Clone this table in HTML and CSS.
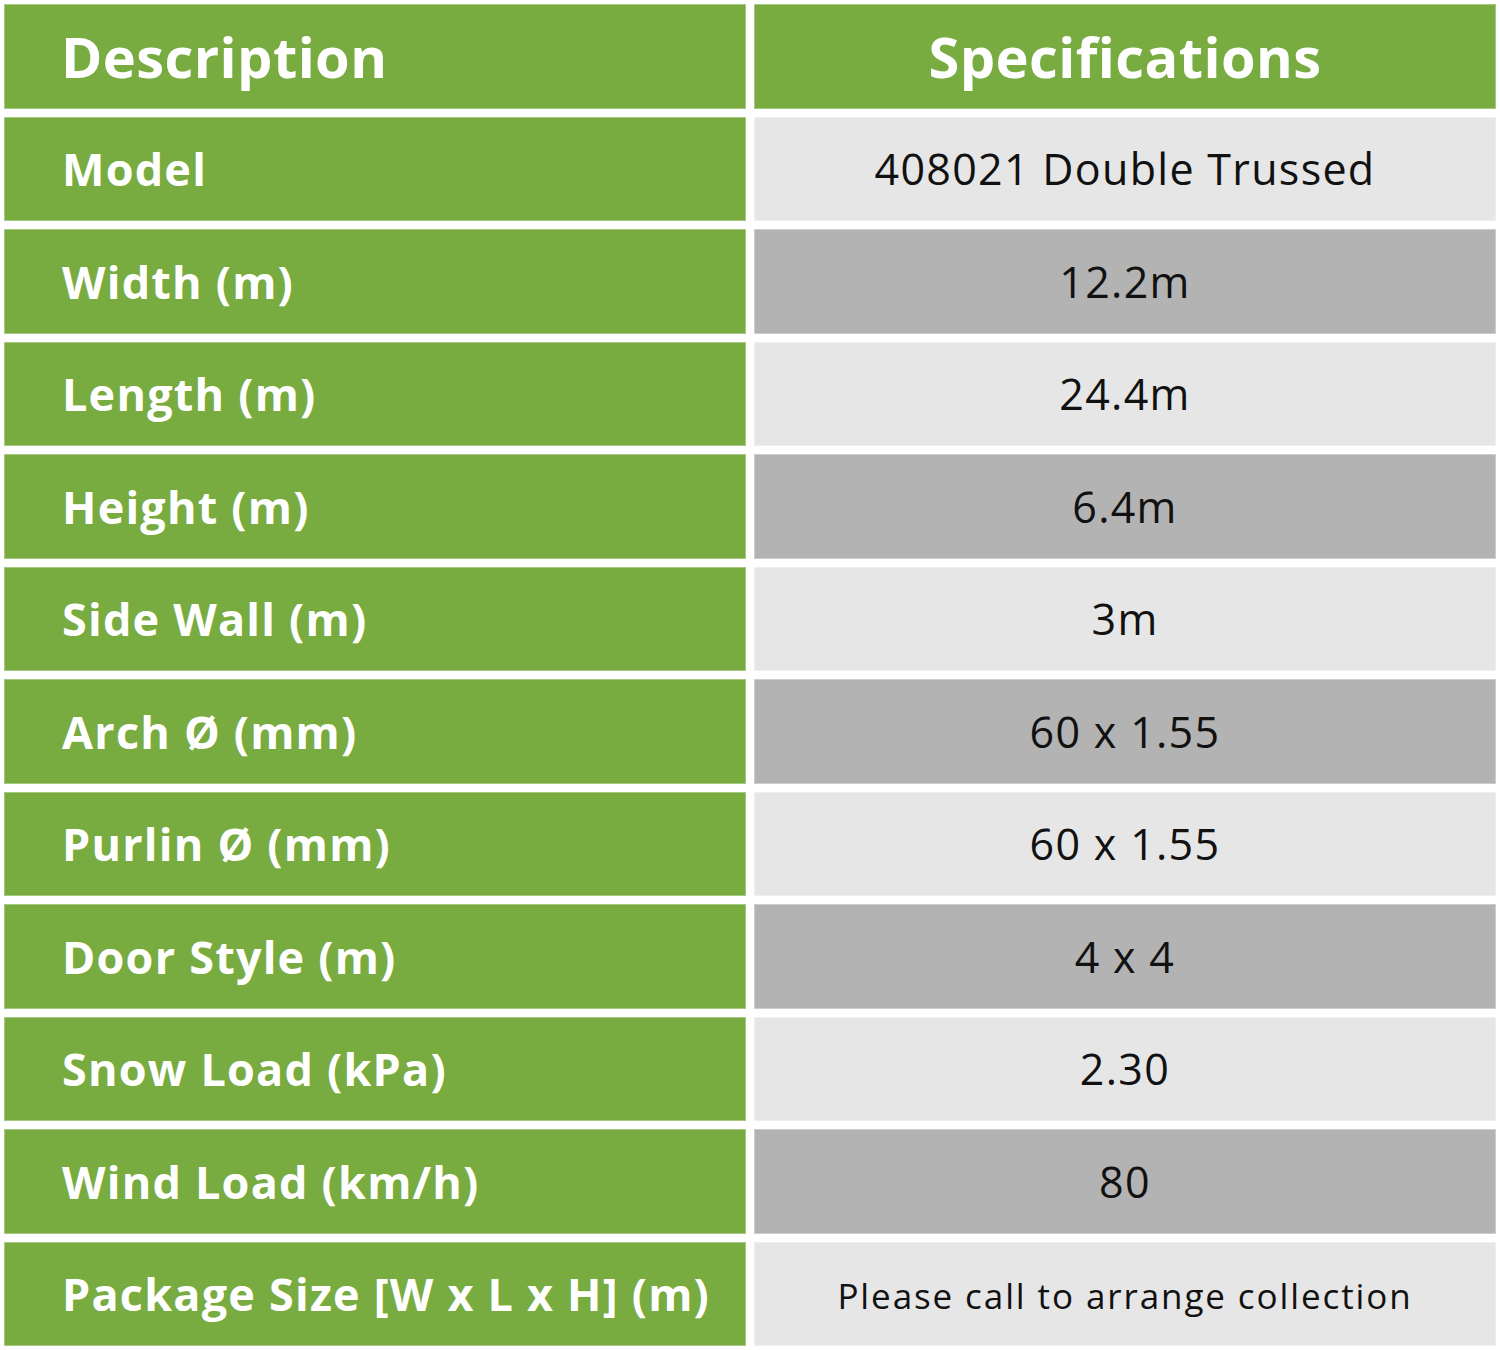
FILE: index.html
```html
<!DOCTYPE html>
<html lang="en">
<head>
<meta charset="utf-8">
<title>Specifications</title>
<link rel="stylesheet" href="styles.css">
</head>
<body>
<div class="spec-table">
  <div class="cell head label">Description</div>
  <div class="cell head value">Specifications</div>

  <div class="cell label">Model</div>
  <div class="cell value light">408021 Double Trussed</div>

  <div class="cell label">Width (m)</div>
  <div class="cell value dark">12.2m</div>

  <div class="cell label">Length (m)</div>
  <div class="cell value light">24.4m</div>

  <div class="cell label">Height (m)</div>
  <div class="cell value dark">6.4m</div>

  <div class="cell label">Side Wall (m)</div>
  <div class="cell value light">3m</div>

  <div class="cell label">Arch Ø (mm)</div>
  <div class="cell value dark">60 x 1.55</div>

  <div class="cell label">Purlin Ø (mm)</div>
  <div class="cell value light">60 x 1.55</div>

  <div class="cell label">Door Style (m)</div>
  <div class="cell value dark">4 x 4</div>

  <div class="cell label">Snow Load (kPa)</div>
  <div class="cell value light">2.30</div>

  <div class="cell label">Wind Load (km/h)</div>
  <div class="cell value dark">80</div>

  <div class="cell label">Package Size [W x L x H] (m)</div>
  <div class="cell value light small">Please call to arrange collection</div>
</div>
</body>
</html>
```

FILE: styles.css
```css
html, body {
  margin: 0;
  padding: 0;
  background: #ffffff;
}

body {
  font-family: "Open Sans", "Noto Sans", "Liberation Sans", sans-serif;
}

.spec-table {
  box-sizing: border-box;
  width: 1500px;
  height: 1350px;
  padding: 4px;
  display: grid;
  grid-template-columns: 1fr 1fr;
  grid-template-rows: repeat(12, 1fr);
  gap: 8px;
}

.cell {
  display: flex;
  align-items: center;
  white-space: nowrap;
  box-shadow: inset 0 0 0 1px rgba(255, 255, 255, 0.35);
}

.label {
  background: #78ab40;
  color: #ffffff;
  font-weight: 700;
  font-size: 45px;
  padding-left: 58px;
  letter-spacing: 1.2px;
}

.value {
  justify-content: center;
  color: #111111;
  font-size: 43px;
  font-weight: 400;
  letter-spacing: 1.3px;
}

.head {
  background: #78ab40;
  color: #ffffff;
  font-weight: 700;
  font-size: 56px;
  letter-spacing: 0.4px;
}

.label.head {
  padding-left: 57px;
}

.light {
  background: #e6e6e6;
}

.dark {
  background: #b3b3b3;
}

.small {
  font-size: 35px;
  letter-spacing: 1.9px;
  padding-top: 4px;
}
```
